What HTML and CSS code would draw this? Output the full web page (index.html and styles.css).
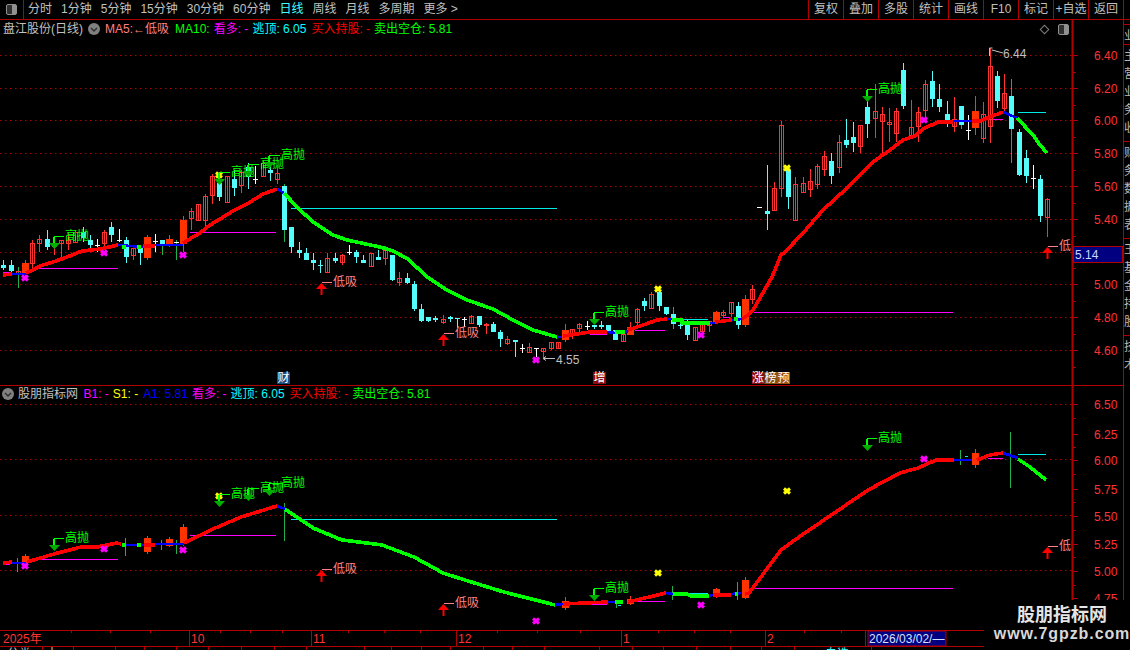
FILE: index.html
```html
<!DOCTYPE html>
<html lang="zh">
<head>
<meta charset="utf-8">
<title>盘江股份(日线)</title>
<link rel="stylesheet" href="styles.css">
</head>
<body>
<div class="app">
  <header class="toolbar">
    <div class="panel-toggle"><span class="square-icon"><span></span></span></div>
    <nav class="periods">
      <span>分时</span><span>1分钟</span><span>5分钟</span><span>15分钟</span><span>30分钟</span><span>60分钟</span>
      <span class="active">日线</span><span>周线</span><span>月线</span><span>多周期</span><span>更多 &gt;</span>
    </nav>
    <div class="actions">
      <span>复权</span><span>叠加</span><span>多股</span><span>统计</span><span>画线</span><span>F10</span><span>标记</span><span>+自选</span><span>返回</span>
    </div>
    <div class="corner"></div>
  </header>
  <div class="workspace">
    <main class="charts">
      <section class="pane pane-top">
        <svg id="chart-top" class="chart" viewBox="0 20 1123 365" width="1123" height="365"></svg>
        <div class="legend legend-top">
          <span class="name">盘江股份(日线)</span>
          <svg class="chevron" viewBox="0 0 12 12" width="12" height="12"><circle cx="6" cy="6" r="6"/><path d="M3 5l3 3 3-3"/></svg>
          <span class="pink">MA5:←低吸</span><span class="green ma10">MA10:</span><span class="magenta">看多: -</span><span class="cyan">逃顶: 6.05</span><span class="red buy">买入持股: -</span><span class="green">卖出空仓: 5.81</span>
        </div>
        <div class="tools">
          <span class="diamond"></span>
          <span class="square-icon"><span></span></span>
        </div>
      </section>
      <section class="pane pane-bottom">
        <svg id="chart-bottom" class="chart" viewBox="0 386 1123 244" width="1123" height="244"></svg>
        <div class="legend legend-bottom">
          <svg class="chevron" viewBox="0 0 12 12" width="12" height="12"><circle cx="6" cy="6" r="6"/><path d="M3 5l3 3 3-3"/></svg>
          <span class="name">股朋指标网</span>
          <span class="magenta b1">B1: -</span><span class="yellow">S1: -</span><span class="blue a1">A1: 5.81</span><span class="magenta">看多: -</span><span class="cyan">逃顶: 6.05</span><span class="red buy">买入持股: -</span><span class="green">卖出空仓: 5.81</span>
        </div>
      </section>
    </main>
    <aside class="sidebar">
      <div class="side-head"></div>
      <div class="side-block side-a"><span>业</span></div>
      <div class="side-block side-b"><span>主</span><span>营</span><span>业</span><span>务</span><span>收</span></div>
      <div class="side-block side-b"><span>财</span><span>务</span><span>数</span><span>据</span><span>表</span></div>
      <div class="side-block side-b"><span>王</span><span>基</span><span>金</span><span>持</span><span>股</span></div>
      <div class="side-block side-c"><span>技</span><span>术</span></div>
    </aside>
  </div>
  <svg id="timebar" class="timebar" viewBox="0 630 1130 20" width="1130" height="20"></svg>
  <div class="watermark">
    <strong>股朋指标网</strong>
    <b>www.7gpzb.com</b>
  </div>
</div>
<script src="chart.js"></script>
</body>
</html>
```

FILE: styles.css
```css
* { box-sizing: border-box; }
html, body { margin: 0; padding: 0; background: #000; overflow: hidden; }
body { width: 1130px; height: 650px; font: 12px/16px "Liberation Sans", "Noto Sans CJK SC", sans-serif; color: #c0c0c0; }
.app { position: relative; width: 1130px; height: 650px; display: flex; flex-direction: column; background: #000; overflow: hidden; }

.toolbar { display: flex; height: 20px; flex: none; border-bottom: 1px solid #b00000; line-height: 19px; }
.panel-toggle { width: 24px; display: flex; align-items: center; justify-content: center; border-right: 1px solid #b00000; }
.square-icon { display: block; width: 11px; height: 11px; border: 1px solid #909090; border-radius: 2px; background: #303030; }
.square-icon span { display: block; width: 4px; height: 9px; margin-left: 5px; background: #909090; }
.periods { display: flex; gap: 9px; padding-left: 4px; }
.periods .active { color: #40ffff; }
.actions { display: flex; margin-left: auto; }
.actions span { width: 35px; text-align: center; border-left: 1px solid #b00000; }
.corner { width: 7px; border-left: 1px solid #b00000; }

.workspace { display: flex; flex: none; height: 610px; }
.charts { width: 1123px; flex: none; display: flex; flex-direction: column; }
.pane { position: relative; flex: none; }
.pane-top { height: 366px; border-bottom: 1px solid #b00000; }
.pane-bottom { height: 244px; }
.chart { display: block; }

.legend { position: absolute; display: flex; gap: 4px; white-space: nowrap; align-items: center; height: 16px; }
.legend-top { left: 3px; top: 1px; }
.legend-top .chevron { margin: 0 1px; }
.legend-bottom { left: 2px; top: 0; }
.ma10 { margin-left: 2px; }
.buy { margin-left: 1px; }
.b1 { margin-left: 1.5px; }
.a1 { margin-left: 1px; }
.chevron circle { fill: #808080; }
.chevron path { fill: none; stroke: #303030; stroke-width: 1.5; }
.name { color: #c0c0c0; }
.pink { color: #ff8080; }
.green { color: #00ff00; }
.magenta { color: #ff00ff; }
.cyan { color: #00ffff; }
.red { color: #ff0000; }
.yellow { color: #ffff00; }
.blue { color: #0000ff; }

.tools { position: absolute; left: 1039px; top: 4px; display: flex; gap: 8px; align-items: center; }
.diamond { display: block; width: 7px; height: 7px; border: 1px solid #808080; transform: rotate(45deg); margin: 2px; }

.sidebar { width: 7px; flex: none; border-left: 1px solid #b00000; overflow: hidden; white-space: nowrap; }
.side-head { height: 5px; border-bottom: 1px solid #b00000; }
.side-block { border-bottom: 1px solid #b00000; display: flex; flex-direction: column; padding-top: 2px; line-height: 18px; }
.side-block span { display: block; color: #b8b8b8; }
.side-a { height: 20px; }
.side-b { height: 97px; }
.side-c { height: 274px; }

.timebar { display: block; flex: none; }

.watermark { position: absolute; left: 984px; top: 600px; width: 146px; height: 50px; padding-left: 10px; background: #000; display: flex; flex-direction: column; align-items: center; color: #e4e4e4; }
.watermark strong { font-size: 18px; line-height: 22px; margin-top: 4px; }
.watermark b { font-size: 16px; line-height: 18px; letter-spacing: 0.9px; margin-top: -1px; font-weight: bold; color: #d8d8d8; }

/* chart drawing */
.grid { stroke: #b00000; stroke-width: 1; stroke-dasharray: 1.5 3.5; fill: none; }
.ax { stroke: #b00000; stroke-width: 1; fill: none; }
.ax2 { stroke: #b00000; stroke-width: 2; fill: none; }
.price { fill: #ff3232; font-size: 12px; font-family: "Liberation Sans", sans-serif; }
.c-cyan { fill: #54fcfc; }
.c-red { fill: none; stroke: #ff3232; }
.c-fill { fill: #ff3200; }
.w-cyan { fill: #54fcfc; }
.w-red { fill: #ff3232; }
.w-green { fill: #20b050; }
.w-white { fill: #fff; }
.seg { fill: none; stroke-linejoin: round; shape-rendering: crispEdges; }
.s-r { stroke: #ff0000; }
.s-b { stroke: #0000ff; stroke-width: 2.6px; }
.s-g { stroke: #00ff00; }
.h-mag { stroke: #ff00ff; }
.h-cyan { stroke: #00e8e8; }
.x-mag { stroke: #ff00ff; stroke-width: 3; fill: none; }
.x-yel { stroke: #ffff00; stroke-width: 3; fill: none; }
.hi-line { stroke: #00ff00; fill: none; }
.hi-tri { fill: #00b000; }
.hi-text { fill: #00ff00; font-size: 12px; }
.lo-line { stroke: #ff8080; fill: none; }
.lo-shaft { stroke: #ff0000; stroke-width: 2; fill: none; }
.lo-tri { fill: #ff0000; }
.lo-text { fill: #ff8080; font-size: 12px; }
.mark { fill: #c0c0c0; font-size: 12px; }
.mark-line { stroke: #c0c0c0; fill: none; }
.badge { fill: #fff; font-size: 12px; }
.b-blue { fill: #1a4a80; }
.b-dark { fill: #8a0c0c; }
.b-brown { fill: #8a5010; }
.b-orange { fill: #a05010; }
.blackout { fill: #000; }
.sel-box { fill: #000080; stroke: #b00000; }
.sel-text { fill: #c8d8ff; font-size: 12px; font-family: "Liberation Sans", sans-serif; }
.t-label { fill: #ff3232; font-size: 12px; }
.t-gray { fill: #c0c0c0; font-size: 12px; }
.t-cyan { fill: #40ffff; font-size: 12px; }
.date-box { fill: #000080; stroke: #b00000; }
.date-text { fill: #d8e0ff; font-size: 12px; font-family: "Liberation Sans", sans-serif; }
```

FILE: chart.js
```js
var CANDLES = [
'c 265 268 260 270','c 265 271 260 275','rg 271 274 267 288','R 263 274 260 277','r 243 263 240 270','r 239 243 235 252','c 239 247 230 250','r 243 246 237 255',
'r 240 243 240 257','r 240 243 232 250','r 232 242 230 242','c 232 238 227 242','c 240 245 235 249','w 245 245 239 252','r 232 243 230 250','c 227 235 222 242',
'w 240 240 229 242','c 240 257 237 263','r 248 255 245 260','c 248 253 245 265','R 237 258 235 260','w 241 241 234 252','cg 240 245 240 255','R 239 246 235 247',
'wg 242 242 240 260','R 220 244 216 252','r 211 218 208 230','r 204 220 204 220','r 196 220 194 227','r 176 195 174 204','c 183 197 175 201','r 176 202 176 202',
'c 179 188 170 196','r 172 185 170 193','c 167 177 163 189','w 179 179 166 184','r 163 176 160 176','c 170 173 163 181','r 173 179 165 184','cg 186 230 184 242',
'c 227 247 227 253','c 250 253 242 258','c 253 260 248 260','c 260 263 253 270','c 265 266 260 273','r 258 272 253 272','c 258 261 253 263','r 255 262 254 265',
'w 252 252 245 255','c 252 257 250 263','c 260 263 255 263','r 253 266 253 266','c 257 260 250 260','r 250 258 246 265','c 255 280 255 281','r 278 282 272 286',
'c 278 283 273 284','c 284 309 281 311','c 309 321 304 322','c 317 321 317 322','c 318 320 316 322','r 319 322 315 324','c 317 319 316 322','c 318 319 318 328',
'w 319 319 317 327','r 316 323 315 323','c 316 325 316 327','r 324 325 323 334','c 324 332 322 332','c 332 339 330 347','r 339 343 336 345','c 340 342 340 357',
'w 348 348 344 353','r 347 352 343 353','w 348 348 348 357','r 348 351 348 358','r 342 348 342 350','r 342 348 342 348','R 330 340 324 342','r 329 335 329 339',
'r 324 328 323 335','w 326 326 321 330','c 325 327 325 329','c 325 327 321 329','c 325 331 325 331','c 330 340 330 340','r 334 341 332 342','R 327 335 322 335',
'r 309 322 308 327','c 301 306 298 311','r 294 308 292 309','c 292 306 290 311','c 307 314 307 315','cg 314 324 307 329','c 325 326 320 329','c 324 335 320 340',
'r 327 340 327 340','r 321 331 321 331','r 321 325 321 332','R 312 323 311 324','r 312 315 310 317','r 302 313 302 317','c 306 325 302 329','R 299 325 295 327',
'r 289 299 285 304','w 207 207 207 207','c 211 214 165 230','r 188 210 182 210','r 125 188 121 197','c 170 197 170 209','r 184 220 177 220','r 183 192 177 193',
'r 181 189 169 197','r 166 184 164 189','r 156 169 151 176','c 161 176 153 184','r 142 167 135 173','c 140 145 119 148','c 137 143 122 152','r 125 146 125 153',
'c 107 124 97 138','r 111 118 84 138','r 114 121 107 154','r 122 124 108 142','r 111 133 108 142','c 70 106 63 109','r 127 135 100 137','r 112 126 107 142',
'r 84 110 80 117','c 81 99 71 107','c 99 107 84 112','c 114 121 101 127','r 119 126 97 132','cg 106 125 106 129','w 130 130 115 140','R 111 128 96 135',
'r 114 138 102 143','r 66 126 48 143','c 76 101 71 108','r 93 108 74 112','cg 96 129 79 163','c 132 175 129 176','c 158 176 150 183','w 178 178 165 189',
'c 179 216 175 222','r 199 217 198 237'
];

var BOTTOM_CANDLES = [
[3,556,563,554,565],[20,538,552,536,554],[23,539,546,537,547],[25,527,543,524,546],[78,601,608,597,610],
[87,599,604,596,605],[99,589,597,588,598],[103,580,598,577,599],[135,453,465,449,468]
];

var TOP_SEG = [
['r',[3,275,12,274]],['b',[12,274,26,274]],
['r',[26,273,33,270,40,266,53,262,67,257,82,251,100,249,118,245]],
['b',[118,245,143,247]],['g',[122,247,126,247]],['g',[137,247,141,247]],
['r',[143,246,155,246]],['b',[155,245,183,245]],
['r',[183,243,200,233,210,225,220,219,233,211,247,204,263,194,277,189]],['b',[277,189,284,193]],
['g',[284,193,297,207,313,222,333,235,347,240,380,247,393,251,408,259,427,277,447,290,467,300,493,309,513,320,533,330,557,337]],
['b',[557,337,562,337]],['r',[563,336,590,332,607,332]],['b',[607,332,615,333]],['g',[615,332,625,332]],['b',[625,332,628,331]],
['r',[628,330,643,325,657,320,667,319]],['b',[667,319,672,319]],['g',[672,320,682,320,682,323,710,323]],['b',[710,323,715,323]],
['r',[715,322,732,320]],['b',[732,320,742,319]],['g',[734,319,738,319]],
['r',[742,319,748,315,753,310,760,298,772,277,781,255,785,252,803,233,823,210,847,188,867,168,873,162,890,150,903,140,915,136,923,129,938,122,953,122]],
['b',[953,121,972,121]],['r',[972,121,980,121,990,117,1003,112]],['b',[1003,112,1017,118]],
['g',[1017,118,1033,135,1040,145,1047,153]]
];

var BOT_SEG = [
['r',[3,563,12,562]],['b',[12,563,26,563]],
['r',[27,562,54,554,81,547,97,547,117,543,121,544]],
['b',[121,545,144,545]],['g',[122,545,126,545]],['g',[137,545,141,545]],
['r',[144,545,155,545]],['b',[155,544,184,544]],
['r',[184,543,213,529,241,517,277,506]],['b',[277,506,285,509]],
['g',[285,509,313,528,342,540,382,545,414,557,443,573,468,581,504,592,555,605]],
['b',[555,605,563,604]],['r',[563,604,608,602]],['b',[608,602,615,602]],['g',[615,602,623,602]],
['r',[628,602,666,593]],['b',[666,593,673,594]],['g',[673,594,687,594,691,596,709,596]],['b',[709,596,713,595]],
['r',[713,595,731,595]],['b',[731,594,741,593]],['g',[735,594,738,594]],
['r',[745,594,749,593,781,550,799,537,868,490,900,473,918,468,936,460,954,460]],
['b',[954,460,972,460]],['r',[977,460,990,455,1003,453]],['b',[1003,453,1018,458]],
['g',[1018,459,1030,467,1046,480]]
];

function cx(i) { return Math.round(3.3 + 7.2 * i); }
function rect(x, y, w, h, cls) { return '<rect x="' + x + '" y="' + y + '" width="' + w + '" height="' + h + '" class="' + cls + '"/>'; }
function line(x1, y1, x2, y2, cls) { return '<line x1="' + x1 + '" y1="' + y1 + '" x2="' + x2 + '" y2="' + y2 + '" class="' + cls + '"/>'; }
function text(x, y, s, cls) { return '<text x="' + x + '" y="' + y + '" class="' + cls + '">' + s + '</text>'; }
function hline(x1, x2, y, cls) { return line(x1, y + .5, x2, y + .5, cls); }
function vline(x, y1, y2, cls) { return line(x + .5, y1, x + .5, y2, cls); }

function grid(ys) { return ys.map(function (y) { return hline(0, 1073, y, 'grid'); }).join(''); }

function candle(i, s) {
  var p = s.split(' '), t = p[0].charAt(0), g = p[0].length > 1;
  var top = +p[1], bot = +p[2], hi = +p[3], lo = +p[4], x = cx(i), o = '';
  var wk = g ? 'w-green' : (t === 'c' ? 'w-cyan' : t === 'w' ? 'w-white' : 'w-red');
  if (lo > hi) o += rect(x, hi, 1, lo - hi, wk);
  if (t === 'c') o += rect(x - 2, top, 5, Math.max(1, bot - top), 'c-cyan');
  if (t === 'R') o += rect(x - 3, top, 7, bot - top, 'c-fill');
  if (t === 'r') o += rect(x - 2 + .5, top + .5, 4, Math.max(1, bot - top), 'c-red');
  if (t === 'w') o += rect(x - 2, top, 5, 1, 'w-white');
  return o;
}

function segs(list, w) {
  return list.map(function (s) {
    var pts = [];
    for (var i = 0; i < s[1].length; i += 2) pts.push(s[1][i] + ',' + s[1][i + 1]);
    return '<polyline points="' + pts.join(' ') + '" class="seg s-' + s[0] + '" stroke-width="' + w + '"/>';
  }).join('');
}

function xMark(x, y, cls) { return '<path d="M' + (x - 3) + ' ' + (y - 2.5) + 'L' + (x + 3) + ' ' + (y + 2.5) + 'M' + (x + 3) + ' ' + (y - 2.5) + 'L' + (x - 3) + ' ' + (y + 2.5) + '" class="' + cls + '"/>'; }

function hi(x, y, tx) {
  return hline(x, tx - 1, y, 'hi-line') + vline(x, y, y + 8, 'hi-line') + vline(x - 1, y + 1, y + 8, 'hi-line') +
    '<polygon points="' + (x - 5) + ',' + (y + 7) + ' ' + (x + 6) + ',' + (y + 7) + ' ' + (x + .5) + ',' + (y + 13) + '" class="hi-tri"/>' +
    text(tx, y + 4, '高抛', 'hi-text');
}
function lo(x, y, tx) {
  return hline(x + 1, tx - 1, y, 'lo-line') +
    '<polygon points="' + (x - 5) + ',' + (y + 7) + ' ' + (x + 6) + ',' + (y + 7) + ' ' + (x + .5) + ',' + (y + 1) + '" class="lo-tri"/>' +
    line(x + .5, y + 6, x + .5, y + 13, 'lo-shaft') +
    text(tx, y + 4, '低吸', 'lo-text');
}

function axis(y1, y2, labels, minor) {
  var o = rect(1073, y1, 50, y2 - y1, 'blackout') + vline(1072, y1, y2, 'ax2');
  labels.forEach(function (l) {
    o += hline(1073, 1078, l[1], 'ax');
    if (l[0]) o += text(1094, l[1] + 5, l[0], 'price');
  });
  minor.forEach(function (y) { o += hline(1073, 1076, y, 'ax'); });
  return o;
}

function drawTop() {
  var o = grid([55, 88, 120, 153, 186, 219, 252, 284, 317, 350]);
  [[3, 10, 272, 'h-mag'], [33, 118, 268, 'h-mag'], [190, 276, 232, 'h-mag'], [291, 557, 208, 'h-cyan'], [590, 607, 334, 'h-mag'], [635, 665, 330, 'h-mag'],
   [672, 708, 319, 'h-cyan'], [723, 730, 317, 'h-mag'], [754, 953, 312, 'h-mag'], [988, 1003, 119, 'h-mag'], [1018, 1046, 112, 'h-cyan']].forEach(function (h) {
    o += hline(h[0], h[1], h[2], h[3]);
  });
  CANDLES.forEach(function (s, i) { o += candle(i, s); });
  o += segs(TOP_SEG, 3.6);
  [[25, 278], [104, 253], [183, 255], [536, 360], [701, 335], [924, 120]].forEach(function (m) { o += xMark(m[0], m[1], 'x-mag'); });
  [[219, 175], [658, 289], [787, 168]].forEach(function (m) { o += xMark(m[0], m[1], 'x-yel'); });
  o += hi(54, 236, 65) + hi(219, 172, 231) + hi(248, 164, 260) + hi(269, 155, 281) + hi(594, 312, 605) + hi(867, 89, 878);
  o += lo(321, 282, 333) + lo(443, 333, 455) + lo(1047, 246, 1059);
  o += '<path d="M989.5 56V48h3M992 50l11 3" class="mark-line"/>' + text(1003, 58, '6.44', 'mark');
  o += '<path d="M555 358.5H543l3-2M543 358.5l3 2" class="mark-line"/>' + text(556, 364, '4.55', 'mark');
  o += rect(277, 372, 13, 12, 'b-blue') + text(277.5, 382, '财', 'badge');
  o += rect(593, 372, 13, 12, 'b-dark') + text(593.5, 382, '增', 'badge');
  o += rect(752, 372, 12.5, 12, 'b-dark') + rect(764.5, 372, 12.5, 12, 'b-brown') + rect(777, 372, 13, 12, 'b-orange');
  o += text(752, 382, '涨', 'badge') + text(764.5, 382, '榜', 'badge') + text(777.5, 382, '预', 'badge');
  o += axis(20, 385, [['6.40', 55], ['6.20', 88], ['6.00', 120], ['5.80', 153], ['5.60', 186], ['5.40', 219], ['', 252], ['5.00', 284], ['4.80', 317], ['4.60', 350]],
    [72, 105, 137, 170, 203, 236, 268, 301, 334, 367]);
  o += '<rect x="1073.5" y="246.5" width="49" height="16" class="sel-box"/>' + text(1075, 259, '5.14', 'sel-text');
  document.getElementById('chart-top').innerHTML = o;
}

function drawBottom() {
  var o = grid([404, 459, 515, 570]);
  [[3, 10, 564, 'h-mag'], [40, 118, 559, 'h-mag'], [190, 276, 535, 'h-mag'], [291, 557, 519, 'h-cyan'], [590, 607, 604, 'h-mag'], [635, 665, 601, 'h-mag'],
   [672, 708, 593, 'h-cyan'], [723, 730, 593, 'h-mag'], [754, 953, 588, 'h-mag'], [988, 1003, 458, 'h-mag'], [1018, 1046, 454, 'h-cyan'], [965, 968, 456, 'h-cyan'], [618, 621, 605, 'h-cyan']].forEach(function (h) {
    o += hline(h[0], h[1], h[2], h[3]);
  });
  [[17, 558, 572], [125, 538, 556], [161, 540, 550], [176, 540, 554], [284, 503, 541], [616, 603, 608], [672, 586, 600], [737, 582, 600], [960, 450, 465], [1010, 432, 488]].forEach(function (v) {
    o += rect(v[0], v[1], 1, v[2] - v[1], 'w-green');
  });
  BOTTOM_CANDLES.forEach(function (c) {
    var x = cx(c[0]);
    o += rect(x, c[3], 1, c[4] - c[3], 'w-red') + rect(x - 3, c[1], 7, c[2] - c[1], 'c-fill');
  });
  o += segs(BOT_SEG, 3.6);
  [[25, 566], [104, 549], [183, 550], [536, 621], [701, 605], [924, 459]].forEach(function (m) { o += xMark(m[0], m[1], 'x-mag'); });
  [[219, 496], [658, 573], [787, 491]].forEach(function (m) { o += xMark(m[0], m[1], 'x-yel'); });
  o += hi(54, 538, 65) + hi(219, 494, 231) + hi(248, 488, 260) + hi(269, 483, 281) + hi(594, 588, 605) + hi(867, 438, 878);
  o += lo(321, 569, 333) + lo(443, 603, 455) + lo(1047, 546, 1059);
  o += axis(386, 630, [['6.50', 404], ['6.25', 434], ['6.00', 460], ['5.75', 489], ['5.50', 516], ['5.25', 544], ['5.00', 571], ['4.75', 598]],
    [418, 447, 474, 502, 530, 557, 585, 612]);
  document.getElementById('chart-bottom').innerHTML = o;
}

function drawTime() {
  var o = hline(0, 1130, 630, 'ax') + hline(0, 1130, 646, 'ax');
  [71, 110, 150, 220, 250, 282, 348, 384, 420, 497, 537, 580, 658, 694, 730, 804, 841].forEach(function (x) { o += vline(x, 630, 633, 'ax'); });
  [[189, '10'], [311, '11'], [456, '12'], [621, '1'], [765, '2']].forEach(function (m) {
    o += vline(m[0], 630, 646, 'ax') + text(m[0] + 2, 643, m[1], 't-label');
  });
  o += text(3, 643, '2025年', 't-label');
  o += vline(865, 630, 646, 'ax');
  o += '<rect x="868" y="631" width="78" height="15" class="date-box"/>' + text(869, 643, '2026/03/02/—', 'date-text');
  [42, 73, 115, 144, 176, 208, 241, 274, 306, 364, 391, 421, 450, 483, 512, 544, 599, 632, 663, 696, 730, 761, 794, 839, 871].forEach(function (x) { o += vline(x, 646, 650, 'ax'); });
  o += text(7, 658, '分类', 't-gray') + text(46, 658, '十', 't-gray') + text(825, 658, '自选', 't-cyan');
  document.getElementById('timebar').innerHTML = o;
}

drawTop();
drawBottom();
drawTime();
```
